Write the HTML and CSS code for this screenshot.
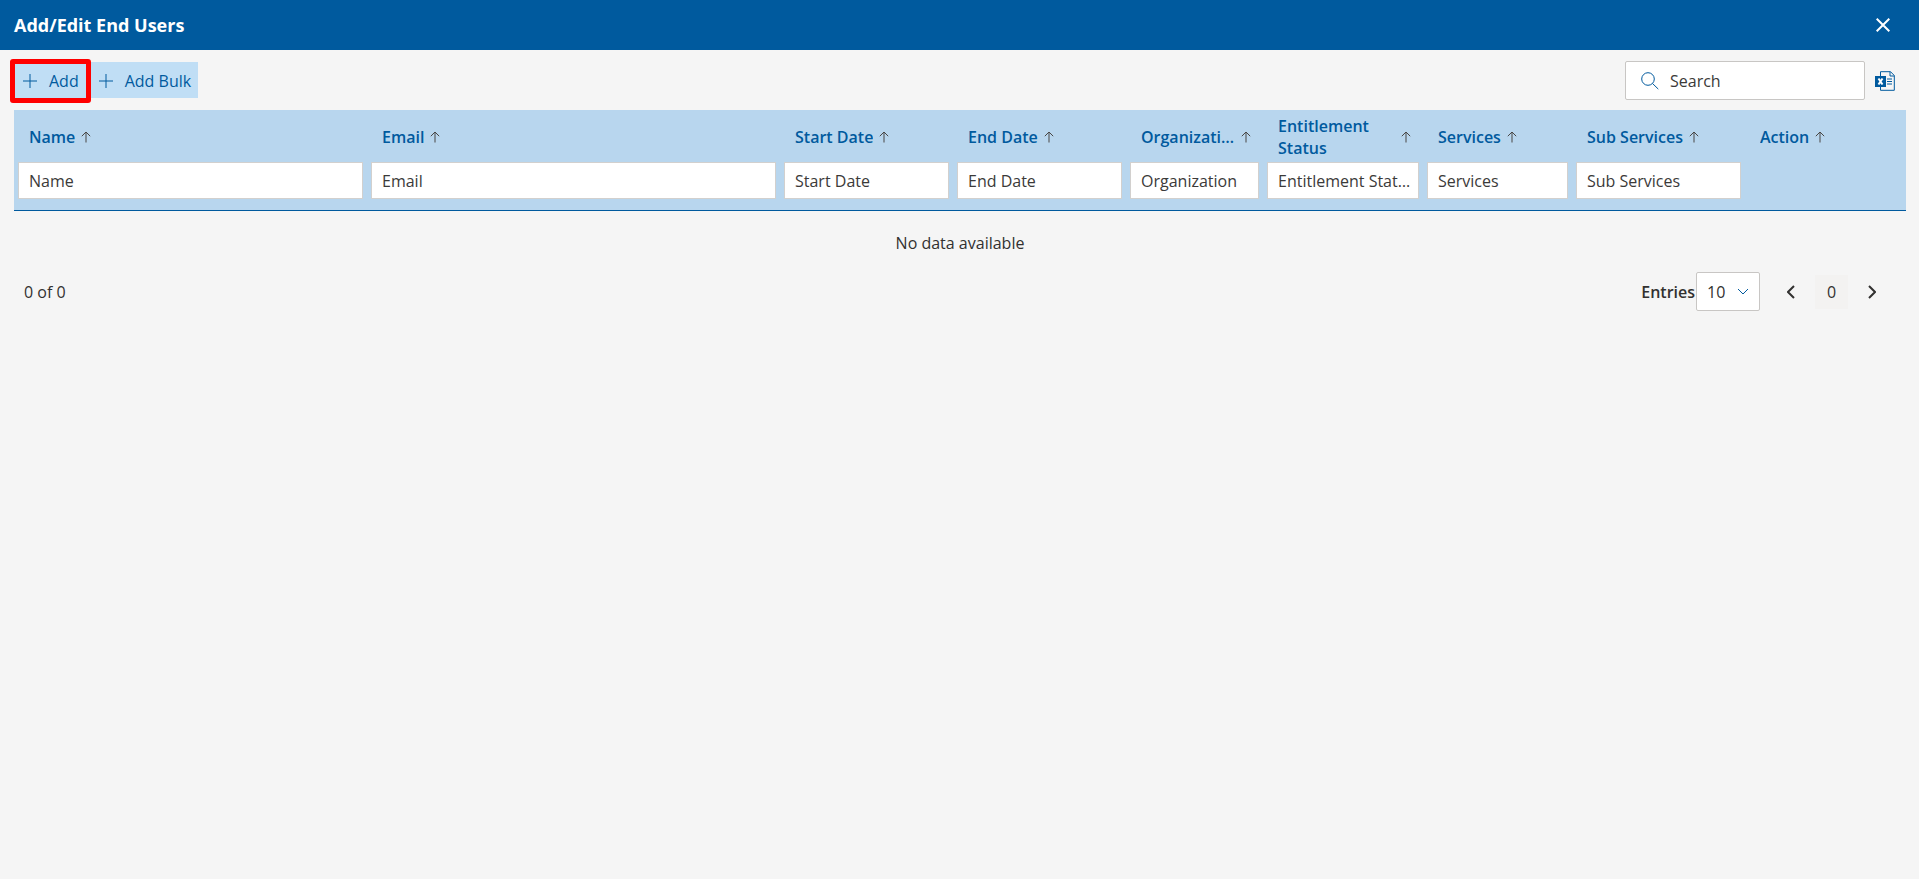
FILE: index.html
```html
<!DOCTYPE html>
<html lang="en">
<head>
<meta charset="utf-8">
<title>Add/Edit End Users</title>
<link rel="stylesheet" href="styles.css">
</head>
<body>
<svg class="sprite" aria-hidden="true">
  <symbol id="up" viewBox="0 0 10 12"><path d="M5 11.5V1M.8 5.2 5 1l4.200 4.200"/></symbol>
  <symbol id="plus" viewBox="0 0 14 14"><path d="M7 0v14M0 7h14"/></symbol>
</svg>
<header class="titlebar">
  <h1 class="title">Add/Edit End Users</h1>
  <button class="icon-btn close" type="button" aria-label="Close"><svg width="14" height="14" viewBox="0 0 14 14"><path d="M.7.700l12.600 12.600M13.300.700.700 13.300"/></svg></button>
</header>
<main class="content">
  <div class="toolbar">
    <div class="commands">
      <span class="highlighted"><button class="command" type="button"><svg class="plus"><use href="#plus"/></svg>Add</button></span>
      <button class="command" type="button"><svg class="plus"><use href="#plus"/></svg>Add Bulk</button>
    </div>
    <div class="tools">
      <label class="search">
        <svg width="18" height="18" viewBox="0 0 18 18"><circle cx="7" cy="7" r="6.300"/><path d="m11.500 11.500 5.800 5.600"/></svg>
        <input type="search" placeholder="Search" aria-label="Search">
      </label>
      <button class="icon-btn excel" type="button" aria-label="Export to Excel">
        <svg width="20" height="20" viewBox="0 0 20 20"><path class="line" d="M5.500 5V.700H15.500l3.800 3.800v14.800H5.500V15M15 .700v4.300h4.300M12 8h5M12 10.500h5M12 13h5"/><path class="block" d="M0 5h11v11H0z"/><path class="cross" d="m3.500 7.500 4 6M7.500 7.500l-4 6"/></svg>
      </button>
    </div>
  </div>
  <table class="grid">
    <colgroup><col class="w-name"><col class="w-email"><col class="w-date"><col class="w-date"><col class="w-org"><col class="w-status"><col class="w-services"><col class="w-date"><col class="w-action"></colgroup>
    <thead>
      <tr class="labels">
        <th><div class="head"><span>Name</span><svg class="up"><use href="#up"/></svg></div></th>
        <th><div class="head"><span>Email</span><svg class="up"><use href="#up"/></svg></div></th>
        <th><div class="head"><span>Start Date</span><svg class="up"><use href="#up"/></svg></div></th>
        <th><div class="head"><span>End Date</span><svg class="up"><use href="#up"/></svg></div></th>
        <th><div class="head"><span>Organization</span><svg class="up"><use href="#up"/></svg></div></th>
        <th><div class="head wrap"><span>Entitlement Status</span><svg class="up"><use href="#up"/></svg></div></th>
        <th><div class="head"><span>Services</span><svg class="up"><use href="#up"/></svg></div></th>
        <th><div class="head"><span>Sub Services</span><svg class="up"><use href="#up"/></svg></div></th>
        <th><div class="head"><span>Action</span><svg class="up"><use href="#up"/></svg></div></th>
      </tr>
      <tr class="filters">
        <td><input type="text" placeholder="Name" aria-label="Name"></td>
        <td><input type="text" placeholder="Email" aria-label="Email"></td>
        <td><input type="text" placeholder="Start Date" aria-label="Start Date"></td>
        <td><input type="text" placeholder="End Date" aria-label="End Date"></td>
        <td><input type="text" placeholder="Organization" aria-label="Organization"></td>
        <td><input type="text" placeholder="Entitlement Status" aria-label="Entitlement Status"></td>
        <td><input type="text" placeholder="Services" aria-label="Services"></td>
        <td><input type="text" placeholder="Sub Services" aria-label="Sub Services"></td>
        <td></td>
      </tr>
    </thead>
    <tbody><tr><td class="empty" colspan="9">No data available</td></tr></tbody>
  </table>
  <footer class="pager">
    <span>0 of 0</span>
    <div class="paging">
      <label class="entries" for="entries">Entries</label>
      <span class="select">
        <select id="entries"><option>10</option><option>25</option><option>50</option></select>
        <svg width="12" height="8" viewBox="0 0 12 8"><path d="m1 1 5 5 5-5"/></svg>
      </span>
      <button class="icon-btn step" type="button" aria-label="Previous page"><svg width="8" height="14" viewBox="0 0 8 14"><path d="M7 1 1 7l6 6"/></svg></button>
      <button class="page" type="button">0</button>
      <button class="icon-btn step" type="button" aria-label="Next page"><svg width="8" height="14" viewBox="0 0 8 14"><path d="m1 1 6 6-6 6"/></svg></button>
    </div>
  </footer>
</main>
</body>
</html>
```

FILE: styles.css
```css
* { box-sizing: border-box; }
body { margin: 0; background: #f5f5f5; color: #323130; font: 16px/22px "Open Sans", "Noto Sans", sans-serif; }
button, input, select { font: inherit; color: inherit; }
svg { flex: none; fill: none; stroke: currentColor; }
.sprite { position: absolute; width: 0; height: 0; }
.titlebar { display: flex; align-items: center; justify-content: space-between; height: 50px; padding: 0 24px 0 14px; background: #005a9e; color: #fff; }
.title { margin: 0; font-size: 18px; font-weight: 700; }
.icon-btn { display: flex; align-items: center; justify-content: center; padding: 0; border: 0; background: none; }
.close { width: 24px; height: 32px; stroke-width: 2; }
.content { padding: 11px 13px 0 14px; }
.toolbar { display: flex; align-items: center; justify-content: space-between; height: 39px; margin-bottom: 10px; }
.commands { display: flex; gap: 5px; padding: 0 0 1px 1px; }
.command { display: flex; align-items: center; gap: 12px; height: 36px; padding: 2px 7px 0 8px; border: 0; background: #c0def5; color: #005a9e; }
.highlighted { position: relative; }
.highlighted::after { content: ""; position: absolute; inset: -3px -5px -5px; border: 5px solid #f00; border-radius: 3px; pointer-events: none; }
.plus { width: 14px; height: 14px; }
.tools { display: flex; align-items: center; gap: 10px; padding-right: 11px; }
.search { display: flex; align-items: center; gap: 11px; width: 240px; height: 39px; padding: 0 15px; border: 1px solid #c8c6c4; border-radius: 2px; background: #fff; color: #005a9e; }
.search input { flex: 1; min-width: 0; padding: 0; border: 0; outline: 0; background: none; }
::placeholder { color: #3b3a39; opacity: 1; }
.excel { width: 20px; height: 24px; color: #005a9e; }
.excel .block { fill: #005a9e; stroke: none; }
.excel .cross { stroke: #fff; stroke-width: 2; }
.grid { width: 100%; table-layout: fixed; border-collapse: separate; border-spacing: 0; }
.w-name { width: 353px; }
.w-email { width: 413px; }
.w-date { width: 173px; }
.w-org { width: 137px; }
.w-status { width: 160px; }
.w-services { width: 149px; }
.w-action { width: 161px; }
.grid thead { background: #b8d6ee; }
.labels th { height: 52px; padding: 1px 12px 0 15px; color: #005a9e; font-weight: 600; text-align: left; }
.head { display: flex; align-items: center; gap: 6px; }
.head span { min-width: 0; overflow: hidden; text-overflow: ellipsis; white-space: nowrap; }
.head.wrap span { flex: 1; white-space: normal; }
.up { width: 10px; height: 12px; color: #484644; }
.filters td { height: 49px; padding: 0 4px; border-bottom: 1px solid #005a9e; vertical-align: top; }
.filters input { display: block; width: 100%; height: 37px; padding: 0 5px 0 10px; border: 1px solid #d2d0ce; background: #fff; text-overflow: ellipsis; }
.empty { height: 61px; padding: 2px 0 0; text-align: center; }
.pager { display: flex; align-items: center; justify-content: space-between; padding: 0 22px 0 10px; }
.paging { display: flex; align-items: center; }
.entries { margin-right: 1px; font-weight: 600; }
.select { display: grid; align-items: center; width: 64px; margin-right: 19px; color: #005a9e; }
.select select { grid-area: 1 / 1; width: 100%; height: 39px; padding: 0 10px; border: 1px solid #c8c6c4; border-radius: 2px; background: #fff; color: #323130; appearance: none; }
.select svg { grid-area: 1 / 1; justify-self: end; margin-right: 11px; pointer-events: none; }
.step { width: 24px; height: 34px; stroke-width: 2; }
.page { width: 33px; height: 34px; margin: 0 12px; padding: 0; border: 0; background: #f3f2f1; }
```
